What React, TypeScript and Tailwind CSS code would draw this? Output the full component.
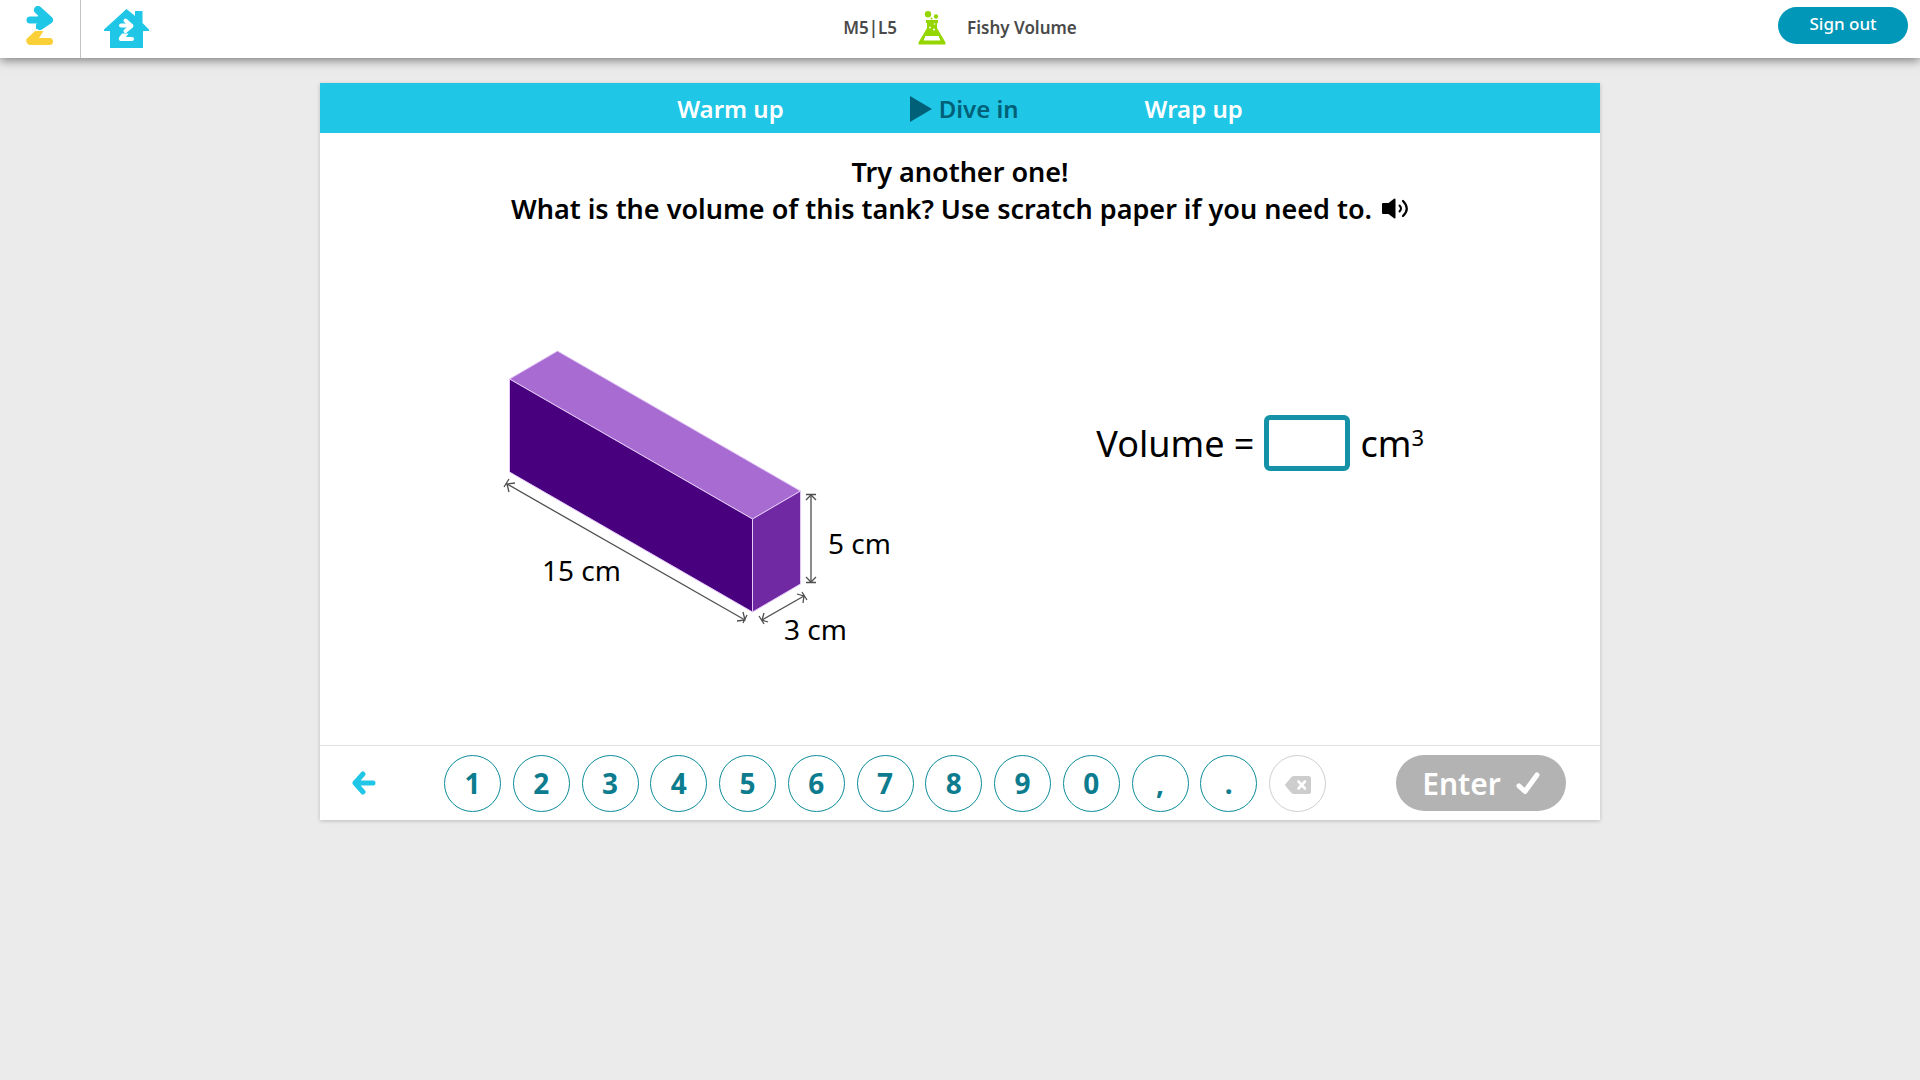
import { useState } from "react";

const KEYS = ["1", "2", "3", "4", "5", "6", "7", "8", "9", "0", ",", "."];

function ZLogo() {
  return (
    <svg width="28" height="40" viewBox="0 0 28 40" fill="none" aria-hidden="true">
      <path d="M12 4 L23 14 L14 20" stroke="#1fc6e6" strokeWidth="8" strokeLinecap="round" strokeLinejoin="round" />
      <path d="M4 14 H22" stroke="#1fc6e6" strokeWidth="7" strokeLinecap="round" />
      <path d="M12 9 L24 14 L14 23 H10 Z" fill="#1fc6e6" />
      <path d="M9 25 H17.5 L13 32 H23.5 Q27 32 27 35.5 Q27 39 23.5 39 H4 Q-0.5 38 0.5 33 Z" fill="#fbcf36" />
    </svg>
  );
}

function HomeIcon() {
  return (
    <svg width="45" height="39" viewBox="0 0 45 39" aria-hidden="true">
      <path d="M22.5 0 L31 7 V2 H38.5 V14 L45 20.5 V22 H39 V39 H6 V22 H0 V20.5 Z" fill="#1fc6e6" />
      <path d="M21.5 11.5 L27.5 17 L21.5 22" fill="none" stroke="#fff" strokeWidth="4" strokeLinecap="round" strokeLinejoin="round" />
      <path d="M17 16.5 H27" stroke="#fff" strokeWidth="4" strokeLinecap="round" />
      <path d="M18 24.5 H24.5 L22 28 H28 Q30 28 30 30 Q30 32 28 32 H16.5 Q14 31 15 28.5 Z" fill="#fff" />
    </svg>
  );
}

function FlaskIcon() {
  return (
    <svg width="28" height="34" viewBox="0 0 28 34" aria-hidden="true">
      <circle cx="10" cy="3.2" r="3.2" fill="#95d600" />
      <circle cx="18" cy="5.5" r="2.2" fill="#95d600" />
      <circle cx="13.5" cy="7.5" r="1" fill="#95d600" />
      <path d="M8 9 H20 V12 H19 V17 L27.5 31.5 V33.5 H0.5 V31.5 L9 17 V12 H8 Z" fill="#95d600" />
      <path d="M7.5 25 H20.5 L22.5 29.5 H5.5 Z" fill="#fff" />
      <circle cx="12" cy="16.5" r="0.9" fill="#fff" />
      <circle cx="16.5" cy="13" r="0.8" fill="#fff" />
      <circle cx="16" cy="18.5" r="1.1" fill="#fff" />
    </svg>
  );
}

function SpeakerIcon() {
  return (
    <svg width="27" height="22" viewBox="0 0 27 22" fill="none" aria-hidden="true">
      <path d="M0 6 Q0 5 1 5 H6.5 L12 0.8 Q13.5 0 13.5 1.5 V19.5 Q13.5 21 12 20.2 L6.5 16 H1 Q0 16 0 15 Z" fill="#000" />
      <path d="M17.5 7.5 Q20.5 10.5 17.5 13.5" stroke="#000" strokeWidth="2" strokeLinecap="round" />
      <path d="M21 3 Q28.5 10.5 21 18" stroke="#000" strokeWidth="2.2" strokeLinecap="round" />
    </svg>
  );
}

function Tank() {
  return (
    <svg width="400" height="306" viewBox="0 0 400 306" role="img" aria-label="Tank, 15 cm by 3 cm by 5 cm">
      <g stroke="#e3c8f7" strokeWidth="1" strokeLinejoin="round">
        <path d="M9.5 35 L57.5 7 L300.5 147 L252.5 175 Z" fill="#a76bd1" />
        <path d="M252.5 175 L300.5 147 V240 L252.5 268 Z" fill="#7029a3" />
        <path d="M9.5 35 L252.5 175 V268 L9.5 128 Z" fill="#48007e" />
      </g>
      <g stroke="#4f4f4f" strokeWidth="1.3" fill="none">
        <path d="M7 140 L245 276" />
        <path d="M9 135 L4 143 M9 148 L7 140 L15 139" />
        <path d="M247 271 L243 279 M237 277 L245 276 L243 268" />
        <path d="M311 150 V237" />
        <path d="M306 150.5 H316 M306 156 L311 151 L316 156" />
        <path d="M306 238.5 H316 M306 233 L311 238 L316 233" />
        <path d="M262 276 L304 252" />
        <path d="M259 272 L264 280 M264 269 L262 276 L268 278" />
        <path d="M302 248 L307 256 M297 250 L304 252 L303 259" />
      </g>
      <g fill="#000" fontSize="28">
        <text x="42" y="237">15 cm</text>
        <text x="328" y="210">5 cm</text>
        <text x="284" y="296">3 cm</text>
      </g>
    </svg>
  );
}

export default function App() {
  const [answer, setAnswer] = useState("");

  return (
    <div className="min-h-screen bg-[#ebebeb] font-['Noto_Sans','Open_Sans',sans-serif] text-black">
      <header className="grid h-[58px] grid-cols-[1fr_auto_1fr] bg-white shadow-[0_2px_10px_rgba(0,0,0,0.5)]">
        <div className="flex">
          <a href="#" aria-label="Zearn" className="flex w-[81px] justify-center border-r border-[#c4c4c4] pt-[6px]">
            <ZLogo />
          </a>
          <a href="#" aria-label="Home" className="ml-[23px] pt-[9px]">
            <HomeIcon />
          </a>
        </div>
        <div className="flex items-center gap-[21px] pb-[3px] text-[17px] font-semibold text-[#4a4a4a]">
          <span>M5|L5</span>
          <FlaskIcon />
          <h1>Fishy Volume</h1>
        </div>
        <div className="flex justify-end pt-[7px] pr-3">
          <button type="button" className="h-[37px] w-[130px] rounded-full bg-[#0097b8] pb-1 text-[17px] font-medium text-white">
            Sign out
          </button>
        </div>
      </header>

      <main className="mx-auto mt-[25px] w-2/3 bg-white shadow-[0_1px_4px_rgba(0,0,0,0.2)]">
        <nav className="flex h-[50px] items-center justify-center gap-[126px] bg-[#1fc6e6] pt-px text-2xl font-semibold text-white">
          <a href="#">Warm up</a>
          <a href="#" aria-current="step" className="flex items-center gap-[7px] text-[#006078]">
            <svg width="22" height="26" viewBox="0 0 22 26" aria-hidden="true">
              <path d="M0 0 L22 13 L0 26 Z" fill="currentColor" />
            </svg>
            Dive in
          </a>
          <a href="#">Wrap up</a>
        </nav>

        <section className="pt-5 text-center text-[27px] leading-[37px] font-semibold">
          <p>Try another one!</p>
          <p className="flex items-center justify-center gap-[10px]">
            What is the volume of this tank? Use scratch paper if you need to.
            <button type="button" aria-label="Read aloud">
              <SpeakerIcon />
            </button>
          </p>
        </section>

        <section className="flex justify-between pt-[117px] pr-[176px] pb-[95px] pl-[180px]">
          <Tank />
          <div className="mt-[71px] flex h-14 items-center gap-[10px] text-4xl">
            <label htmlFor="volume" className="pt-[2px]">
              Volume =
            </label>
            <input
              id="volume"
              value={answer}
              onChange={(e) => setAnswer(e.target.value)}
              className="h-14 w-[86px] rounded-md border-[5px] border-[#1592a8] bg-white text-center outline-none"
            />
            <span className="pt-[2px]">
              cm<sup className="text-[22px]">3</sup>
            </span>
          </div>
        </section>

        <footer className="flex h-[75px] items-center border-t border-[#e0e0e0] pr-[34px] pl-8">
          <button type="button" aria-label="Back">
            <svg width="24" height="24" viewBox="0 0 24 24" fill="none" aria-hidden="true">
              <path d="M11 3 L3 12 L11 21 M4 12 H21" stroke="#1fc6e6" strokeWidth="5" strokeLinecap="round" strokeLinejoin="round" />
            </svg>
          </button>
          <div className="ml-[68px] flex w-[882px] justify-between text-[28px] font-bold text-[#0c7c8e]">
            {KEYS.map((key) => (
              <button
                key={key}
                type="button"
                onClick={() => setAnswer(answer + key)}
                className="flex size-[57px] items-center justify-center rounded-full border border-[#0c8c9a]"
              >
                {key}
              </button>
            ))}
            <button
              type="button"
              aria-label="Delete"
              onClick={() => setAnswer(answer.slice(0, -1))}
              className="flex size-[57px] items-center justify-center rounded-full border border-[#d0d0d0] pt-1"
            >
              <svg width="26" height="18" viewBox="0 0 26 18" aria-hidden="true">
                <path d="M9 0 H23.5 Q26 0 26 2.5 V15.5 Q26 18 23.5 18 H9 Q7.5 18 6.5 17 L0.5 10 Q-0.3 9 0.5 8 L6.5 1 Q7.5 0 9 0 Z" fill="#cdcdcd" />
                <path d="M13.5 5.5 L20 12.5 M20 5.5 L13.5 12.5" stroke="#fff" strokeWidth="2.6" strokeLinecap="round" />
              </svg>
            </button>
          </div>
          <button
            type="button"
            className="ml-auto flex h-14 w-[170px] items-center justify-center gap-[15px] rounded-full bg-[#b3b3b3] text-[30px] font-semibold text-white"
          >
            Enter
            <svg width="24" height="23" viewBox="0 0 24 23" fill="none" aria-hidden="true">
              <path d="M3 14 L9 19.5 L21 3" stroke="currentColor" strokeWidth="5" strokeLinecap="round" strokeLinejoin="round" />
            </svg>
          </button>
        </footer>
      </main>
    </div>
  );
}
